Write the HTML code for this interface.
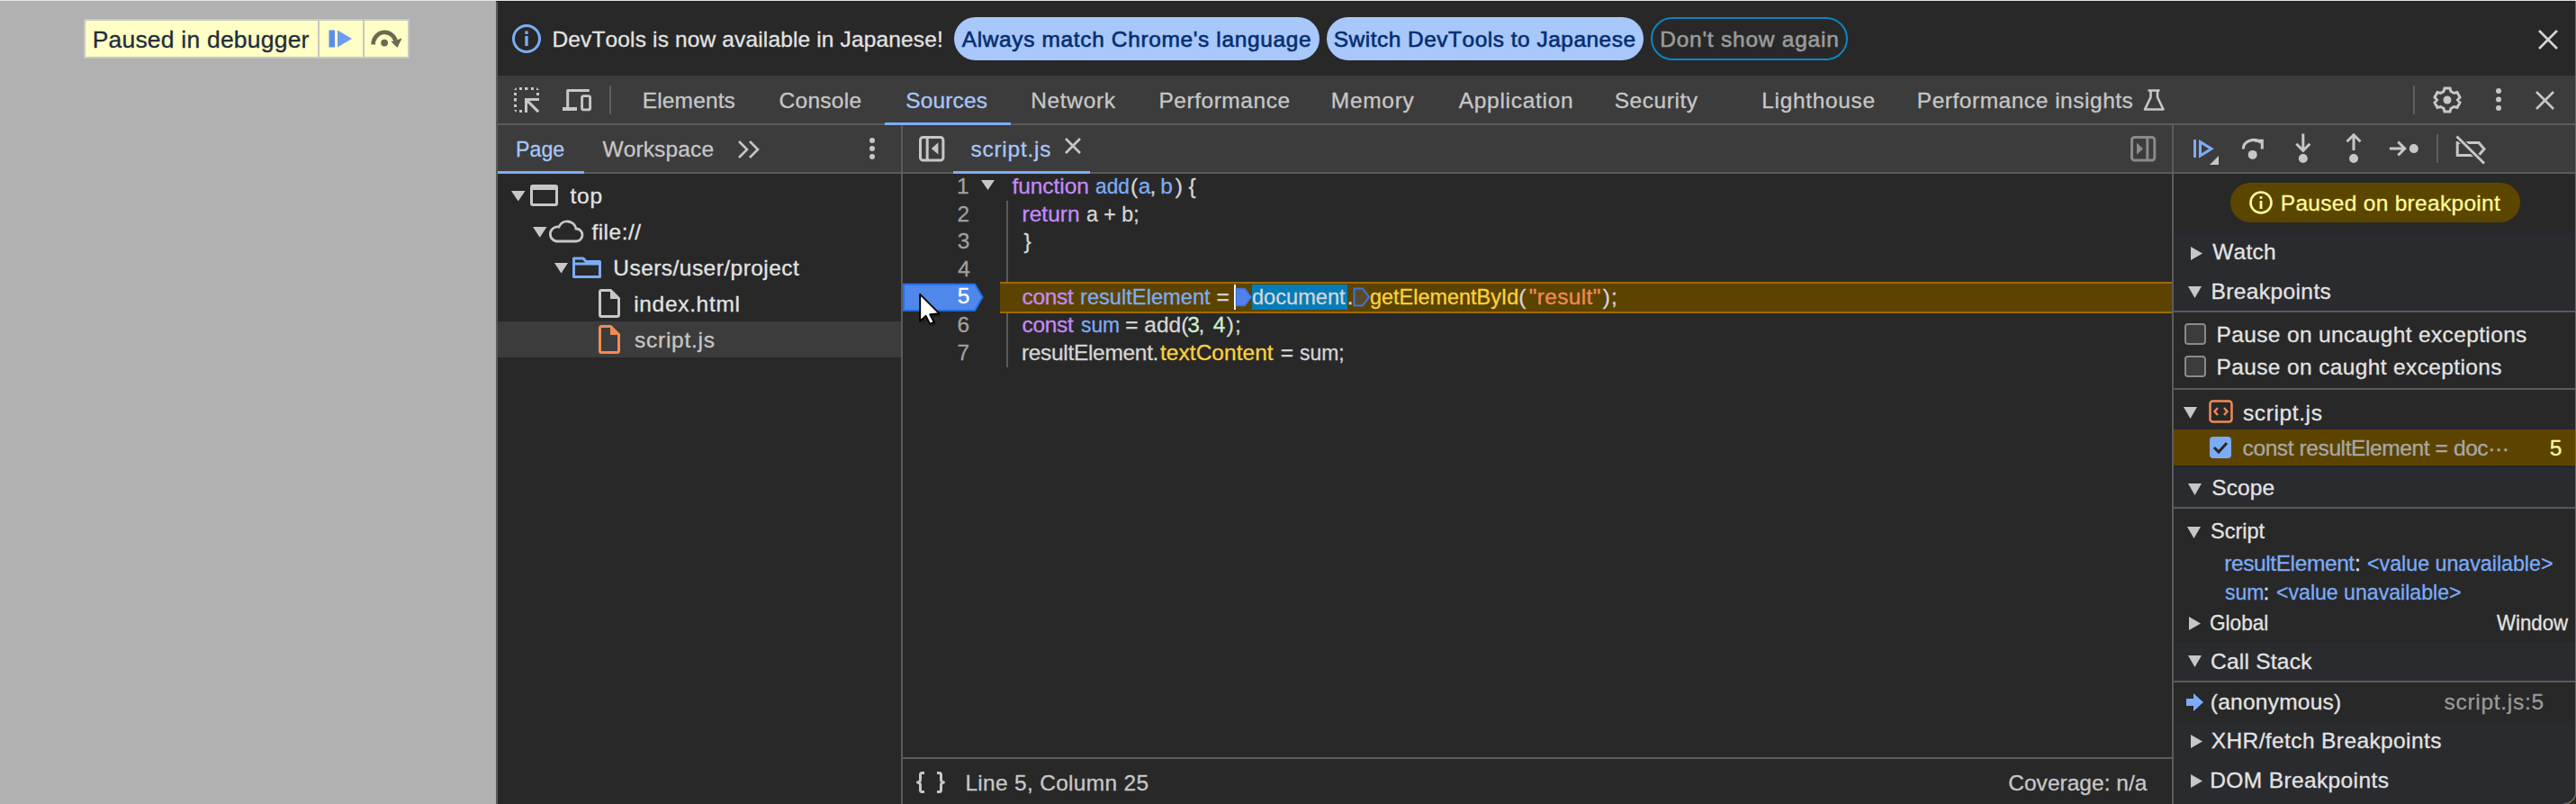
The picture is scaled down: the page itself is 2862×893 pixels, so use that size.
<!DOCTYPE html>
<html><head><meta charset="utf-8"><style>
html,body{margin:0;padding:0;width:2862px;height:893px;overflow:hidden;background:#282828;}
body{position:relative;font-family:"Liberation Sans",sans-serif;font-kerning:none;}
body>div{position:absolute;box-sizing:border-box;}
.t{white-space:pre;-webkit-text-stroke:0.3px currentColor;}
</style></head><body>
<div style="left:0px;top:0px;width:551px;height:893px;background:#b1b1b1;"></div>
<div style="left:0px;top:0px;width:2862px;height:1px;background:#e4e4e4;"></div>
<div style="left:93px;top:21px;width:362px;height:44px;background:#ffffc6;border:2px solid #c8c8c3;"></div>
<div style="left:353px;top:23px;width:2px;height:40px;background:#c8c8c3;"></div>
<div style="left:403px;top:23px;width:2px;height:40px;background:#c8c8c3;"></div>
<div class="t" style="left:102.63px;top:30.76px;font-size:26.5px;line-height:26.5px;color:#222c3a;letter-spacing:0.211px;">Paused in debugger</div>
<svg style="position:absolute;left:364px;top:32px;" width="30" height="22" viewBox="0 0 30 22"><rect x="1.5" y="1.5" width="6.5" height="19" fill="#5e8ee8"/><path d="M11 1.5 L27 11 L11 20.5 Z" fill="#6c9cf0"/></svg>
<svg style="position:absolute;left:405px;top:28px;" width="45" height="30" viewBox="0 0 45 30"><path d="M9.6 21.5 A12.8 13.5 0 0 1 34.5 17" stroke="#6b6b52" stroke-width="4.6" fill="none"/><path d="M29.5 18.2 L41.6 14.6 L36.4 25 Z" fill="#6b6b52"/><circle cx="22.1" cy="19.6" r="3.9" fill="#6b6b52"/></svg>
<div style="left:551px;top:1px;width:2px;height:892px;background:#5a5a5a;"></div>
<div style="left:553px;top:1px;width:2309px;height:83px;background:#282828;"></div>
<div style="left:551px;top:1px;width:2311px;height:1px;background:#212121;"></div>
<svg style="position:absolute;left:567px;top:25px;" width="36" height="36" viewBox="0 0 36 36"><circle cx="18" cy="18" r="14.5" stroke="#7cacf8" stroke-width="3" fill="none"/><rect x="16.3" y="15" width="3.4" height="11" fill="#7cacf8"/><rect x="16.3" y="9.5" width="3.4" height="3.4" fill="#7cacf8"/></svg>
<div class="t" style="left:613.49px;top:31.76px;font-size:24.5px;line-height:24.5px;color:#e3e3e3;letter-spacing:0.142px;">DevTools is now available in Japanese!</div>
<div style="left:1060px;top:19px;width:406px;height:48px;background:#a8c7fa;border-radius:24px;"></div>
<div class="t" style="left:1068.75px;top:31.76px;font-size:24.5px;line-height:24.5px;color:#062e6f;letter-spacing:0.628px;-webkit-text-stroke:0.6px #062e6f;">Always match Chrome's language</div>
<div style="left:1474px;top:19px;width:352px;height:48px;background:#a8c7fa;border-radius:24px;"></div>
<div class="t" style="left:1481.69px;top:31.76px;font-size:24.5px;line-height:24.5px;color:#062e6f;letter-spacing:0.487px;-webkit-text-stroke:0.6px #062e6f;">Switch DevTools to Japanese</div>
<div style="left:1834px;top:19px;width:219px;height:48px;background:transparent;border:2px solid #0f84c4;border-radius:24px;"></div>
<div class="t" style="left:1844.19px;top:31.76px;font-size:24.5px;line-height:24.5px;color:#9a9a9a;letter-spacing:0.761px;-webkit-text-stroke:0.6px #9a9a9a;">Don't show again</div>
<svg style="position:absolute;left:2818px;top:31px;" width="26" height="26" viewBox="0 0 26 26"><path d="M3 3 L23 23 M23 3 L3 23" stroke="#d4d4d4" stroke-width="2.6"/></svg>
<div style="left:553px;top:84px;width:2309px;height:53px;background:#3c3c3c;"></div>
<div style="left:553px;top:137px;width:2309px;height:2px;background:#5b5b5b;"></div>
<svg style="position:absolute;left:569px;top:95px;" width="34" height="34" viewBox="0 0 34 34"><g fill="#c7c7c7"><path d="M2 5 L5 2 V5 Z"/><rect x="8" y="2" width="3" height="3"/><rect x="14" y="2" width="3.5" height="3"/><rect x="21" y="2" width="3" height="3"/><path d="M27 2 L30 5 H27 Z"/><rect x="2" y="8" width="3" height="3"/><rect x="27" y="8" width="3" height="3"/><rect x="2" y="14" width="3" height="3.5"/><rect x="2" y="21" width="3" height="3"/><path d="M2 27 L5 30 V27 Z"/><rect x="8" y="27" width="3" height="3"/><path d="M14 14 H30 V17 H19.2 L30.2 28 L28 30.2 L17 19.2 V30 H14 Z"/></g></svg>
<svg style="position:absolute;left:622px;top:96px;" width="40" height="32" viewBox="0 0 40 32"><path d="M8.7 3 H32.8 V6 H10.2 V23 H19 V27 H3 V23 H7.2 V4.5 Q7.2 3 8.7 3 Z" fill="#c7c7c7"/><rect x="24.6" y="10.6" width="9" height="15.3" rx="2" stroke="#c7c7c7" stroke-width="2.9" fill="none"/></svg>
<div style="left:677px;top:95px;width:2px;height:32px;background:#5f5f5f;"></div>
<div class="t" style="left:713.79px;top:99.76px;font-size:24.5px;line-height:24.5px;color:#c7c7c7;letter-spacing:0.138px;">Elements</div>
<div class="t" style="left:865.56px;top:99.76px;font-size:24.5px;line-height:24.5px;color:#c7c7c7;letter-spacing:0.274px;">Console</div>
<div class="t" style="left:1006.29px;top:99.76px;font-size:24.5px;line-height:24.5px;color:#a8c7fa;letter-spacing:0.120px;">Sources</div>
<div class="t" style="left:1145.29px;top:99.76px;font-size:24.5px;line-height:24.5px;color:#c7c7c7;letter-spacing:0.637px;">Network</div>
<div class="t" style="left:1287.39px;top:99.76px;font-size:24.5px;line-height:24.5px;color:#c7c7c7;letter-spacing:0.545px;">Performance</div>
<div class="t" style="left:1478.79px;top:99.76px;font-size:24.5px;line-height:24.5px;color:#c7c7c7;letter-spacing:0.696px;">Memory</div>
<div class="t" style="left:1620.75px;top:99.76px;font-size:24.5px;line-height:24.5px;color:#c7c7c7;letter-spacing:0.698px;">Application</div>
<div class="t" style="left:1793.69px;top:99.76px;font-size:24.5px;line-height:24.5px;color:#c7c7c7;letter-spacing:0.551px;">Security</div>
<div class="t" style="left:1957.29px;top:99.76px;font-size:24.5px;line-height:24.5px;color:#c7c7c7;letter-spacing:0.658px;">Lighthouse</div>
<div class="t" style="left:2129.79px;top:99.76px;font-size:24.5px;line-height:24.5px;color:#c7c7c7;letter-spacing:0.524px;">Performance insights</div>
<div style="left:983px;top:136px;width:140px;height:3px;background:#7cacf8;"></div>
<svg style="position:absolute;left:2380px;top:98px;" width="28" height="26" viewBox="0 0 28 26"><path d="M6.5 2.5 H19.5 M9.5 2.5 V10 L3 23.5 H23.5 L17 10 V2.5" stroke="#c7c7c7" stroke-width="2.6" fill="none" stroke-linejoin="round"/></svg>
<div style="left:2681px;top:95px;width:2px;height:32px;background:#5f5f5f;"></div>
<svg style="position:absolute;left:2702px;top:95px;" width="34" height="32" viewBox="0 0 34 32"><g transform="translate(17,16)"><path fill="none" stroke="#c7c7c7" stroke-width="3" d="M-3,-13 L3,-13 L4,-9.5 L7.5,-7.5 L11,-8.5 L14,-3 L11.5,0 L14,3 L11,8.5 L7.5,7.5 L4,9.5 L3,13 L-3,13 L-4,9.5 L-7.5,7.5 L-11,8.5 L-14,3 L-11.5,0 L-14,-3 L-11,-8.5 L-7.5,-7.5 L-4,-9.5 Z"/><circle r="4.5" fill="#c7c7c7"/></g></svg>
<svg style="position:absolute;left:2770px;top:96px;" width="12" height="30" viewBox="0 0 12 30"><circle cx="6" cy="5" r="3" fill="#c7c7c7"/><circle cx="6" cy="14.5" r="3" fill="#c7c7c7"/><circle cx="6" cy="24" r="3" fill="#c7c7c7"/></svg>
<svg style="position:absolute;left:2815px;top:100px;" width="26" height="24" viewBox="0 0 26 24"><path d="M3 2 L22 21 M22 2 L3 21" stroke="#c7c7c7" stroke-width="2.6"/></svg>
<div style="left:553px;top:139px;width:448px;height:52px;background:#3c3c3c;"></div>
<div style="left:553px;top:191px;width:448px;height:2px;background:#5b5b5b;"></div>
<div style="left:553px;top:189.5px;width:96px;height:3.5px;background:#7cacf8;"></div>
<div class="t" style="left:573.39px;top:153.76px;font-size:24.5px;line-height:24.5px;color:#a8c7fa;letter-spacing:0.000px;transform:scaleX(0.9479);transform-origin:0 0;">Page</div>
<div class="t" style="left:669.39px;top:153.76px;font-size:24.5px;line-height:24.5px;color:#c7c7c7;letter-spacing:0.145px;">Workspace</div>
<svg style="position:absolute;left:818px;top:154px;" width="30" height="24" viewBox="0 0 30 24"><path d="M3 3 L12 12 L3 21 M15 3 L24 12 L15 21" stroke="#c7c7c7" stroke-width="2.6" fill="none"/></svg>
<svg style="position:absolute;left:963px;top:152px;" width="12" height="28" viewBox="0 0 12 28"><circle cx="6" cy="4" r="3" fill="#c7c7c7"/><circle cx="6" cy="13" r="3" fill="#c7c7c7"/><circle cx="6" cy="22" r="3" fill="#c7c7c7"/></svg>
<div style="left:1001px;top:139px;width:2px;height:754px;background:#5b5b5b;"></div>
<div style="left:553px;top:357px;width:448px;height:40px;background:#3c3c3c;"></div>
<svg style="position:absolute;left:568px;top:212.4px;" width="15.5" height="11.5" viewBox="0 0 15.5 11.5"><path d="M0 0 H15.5 L7.75 11.5 Z" fill="#c7c7c7"/></svg>
<svg style="position:absolute;left:588px;top:204px;" width="34" height="26" viewBox="0 0 34 26"><path fill-rule="evenodd" fill="#c7c7c7" d="M4 1 H29 Q32 1 32 4 V22 Q32 25 29 25 H4 Q1 25 1 22 V4 Q1 1 4 1 Z M4 7 V22 H29 V7 Z"/></svg>
<div class="t" style="left:633.43px;top:205.76px;font-size:24.5px;line-height:24.5px;color:#e3e3e3;letter-spacing:0.771px;">top</div>
<svg style="position:absolute;left:592px;top:252.2px;" width="15.5" height="11.7" viewBox="0 0 15.5 11.7"><path d="M0 0 H15.5 L7.75 11.7 Z" fill="#c7c7c7"/></svg>
<svg style="position:absolute;left:609px;top:244px;" width="40" height="28" viewBox="0 0 40 28"><path d="M9 24 H31 A7 7 0 0 0 31 10 A10 10 0 0 0 12 8 A8 8 0 0 0 9 24 Z" stroke="#c7c7c7" stroke-width="2.8" fill="none"/></svg>
<div class="t" style="left:657.45px;top:245.76px;font-size:24.5px;line-height:24.5px;color:#e3e3e3;letter-spacing:0.468px;">file://</div>
<svg style="position:absolute;left:616px;top:292.4px;" width="15" height="11.4" viewBox="0 0 15 11.4"><path d="M0 0 H15 L7.5 11.4 Z" fill="#c7c7c7"/></svg>
<svg style="position:absolute;left:635px;top:283px;" width="36" height="28" viewBox="0 0 36 28"><path d="M2.5 4 H13 L16 7.5 H31.5 V24.5 H2.5 Z" stroke="#7cacf8" stroke-width="3" fill="none" stroke-linejoin="round"/><path d="M2.5 10 H31.5" stroke="#7cacf8" stroke-width="3"/></svg>
<div class="t" style="left:681.31px;top:285.76px;font-size:24.5px;line-height:24.5px;color:#e3e3e3;letter-spacing:0.458px;">Users/user/project</div>
<svg style="position:absolute;left:663px;top:319px;" width="28" height="36" viewBox="0 0 28 36"><path d="M5 3.5 H15.5 L24.5 12.5 V30.5 Q24.5 32.5 22.5 32.5 H5 Q3.5 32.5 3.5 30.5 V5.5 Q3.5 3.5 5 3.5 Z" stroke="#c7c7c7" stroke-width="3" fill="none" stroke-linejoin="round"/><path d="M15 2 L26 13 H15 Z" fill="#c7c7c7"/></svg>
<div class="t" style="left:704.16px;top:325.76px;font-size:24.5px;line-height:24.5px;color:#e3e3e3;letter-spacing:0.680px;">index.html</div>
<svg style="position:absolute;left:663px;top:359px;" width="28" height="36" viewBox="0 0 28 36"><path d="M5 3.5 H15.5 L24.5 12.5 V30.5 Q24.5 32.5 22.5 32.5 H5 Q3.5 32.5 3.5 30.5 V5.5 Q3.5 3.5 5 3.5 Z" stroke="#f28b54" stroke-width="3" fill="none" stroke-linejoin="round"/><path d="M15 2 L26 13 H15 Z" fill="#f28b54"/></svg>
<div class="t" style="left:705.12px;top:365.76px;font-size:24.5px;line-height:24.5px;color:#c7c7c7;letter-spacing:0.717px;">script.js</div>
<div style="left:1003px;top:139px;width:1410px;height:52px;background:#3c3c3c;"></div>
<div style="left:1003px;top:191px;width:1410px;height:2px;background:#5b5b5b;"></div>
<div style="left:1059px;top:190px;width:152px;height:3px;background:#7cacf8;"></div>
<svg style="position:absolute;left:1020px;top:150px;" width="30" height="30" viewBox="0 0 30 30"><rect x="2.5" y="2.5" width="25.4" height="25.5" rx="3" stroke="#c7c7c7" stroke-width="3" fill="none"/><rect x="8.7" y="2.5" width="3" height="25.5" fill="#c7c7c7"/><path d="M22.4 8.3 V21.6 L14.8 15 Z" fill="#c7c7c7"/></svg>
<div class="t" style="left:1078.52px;top:153.76px;font-size:24.5px;line-height:24.5px;color:#a8c7fa;letter-spacing:0.729px;">script.js</div>
<svg style="position:absolute;left:1182px;top:152px;" width="20" height="20" viewBox="0 0 20 20"><path d="M2 2 L18 18 M18 2 L2 18" stroke="#c7c7c7" stroke-width="2.6"/></svg>
<svg style="position:absolute;left:2366px;top:150px;" width="30" height="30" viewBox="0 0 30 30"><rect x="2.5" y="2.5" width="25.3" height="25.5" rx="3" stroke="#8a8a8a" stroke-width="3" fill="none"/><rect x="18.3" y="2.5" width="3" height="25.5" fill="#8a8a8a"/><path d="M8 8.5 V21.8 L15 15.2 Z" fill="#8a8a8a"/></svg>
<div style="left:1118px;top:223px;width:2px;height:185px;background:#5a5a5a;"></div>
<div style="left:1111px;top:313px;width:1302px;height:35px;background:#5c4300;border-top:2px solid #a06a00;border-bottom:2px solid #a06a00;"></div>
<div class="t" style="left:1062.93px;top:194.56px;font-size:24.5px;line-height:24.5px;color:#a0a0a0;letter-spacing:0.000px;">1</div>
<div class="t" style="left:1063.57px;top:225.51px;font-size:24.5px;line-height:24.5px;color:#a0a0a0;letter-spacing:0.000px;">2</div>
<div class="t" style="left:1063.87px;top:256.46px;font-size:24.5px;line-height:24.5px;color:#a0a0a0;letter-spacing:0.000px;">3</div>
<div class="t" style="left:1064.24px;top:287.41px;font-size:24.5px;line-height:24.5px;color:#a0a0a0;letter-spacing:0.000px;">4</div>
<svg style="position:absolute;left:1002px;top:314px;" width="92" height="33" viewBox="0 0 92 33"><path d="M2 1.8 H81 L89.5 16 L81 30.8 H2 Z" fill="#5087ea" stroke="#1f74f0" stroke-width="2"/></svg>
<div class="t" style="left:1063.82px;top:317.36px;font-size:24.5px;line-height:24.5px;color:#ffffff;letter-spacing:0.000px;">5</div>
<div class="t" style="left:1063.56px;top:349.31px;font-size:24.5px;line-height:24.5px;color:#a0a0a0;letter-spacing:0.000px;">6</div>
<div class="t" style="left:1063.54px;top:380.26px;font-size:24.5px;line-height:24.5px;color:#a0a0a0;letter-spacing:0.000px;">7</div>
<svg style="position:absolute;left:1089.5px;top:199.5px;" width="15" height="11" viewBox="0 0 15 11"><path d="M0 0 H15 L7.5 11 Z" fill="#c7c7c7"/></svg>
<div class="t" style="left:1124.45px;top:194.56px;font-size:24.5px;line-height:24.5px;color:#c58af9;letter-spacing:-0.053px;">function</div>
<div class="t" style="left:1216.83px;top:194.56px;font-size:24.5px;line-height:24.5px;color:#7cacf8;letter-spacing:0.000px;transform:scaleX(0.9279);transform-origin:0 0;">add</div>
<div class="t" style="left:1255.88px;top:194.56px;font-size:24.5px;line-height:24.5px;color:#d6d6d6;letter-spacing:0.000px;">(</div>
<div class="t" style="left:1264.76px;top:194.56px;font-size:24.5px;line-height:24.5px;color:#7cacf8;letter-spacing:0.000px;">a</div>
<div class="t" style="left:1277.60px;top:194.56px;font-size:24.5px;line-height:24.5px;color:#d6d6d6;letter-spacing:0.000px;">,</div>
<div class="t" style="left:1289.22px;top:194.56px;font-size:24.5px;line-height:24.5px;color:#7cacf8;letter-spacing:0.000px;">b</div>
<div class="t" style="left:1305.66px;top:194.56px;font-size:24.5px;line-height:24.5px;color:#d6d6d6;letter-spacing:0.000px;">)</div>
<div class="t" style="left:1320.39px;top:194.56px;font-size:24.5px;line-height:24.5px;color:#d6d6d6;letter-spacing:0.000px;">{</div>
<div class="t" style="left:1135.47px;top:225.51px;font-size:24.5px;line-height:24.5px;color:#c58af9;letter-spacing:0.023px;">return</div>
<div class="t" style="left:1206.81px;top:225.51px;font-size:24.5px;line-height:24.5px;color:#d6d6d6;letter-spacing:0.000px;transform:scaleX(0.9466);transform-origin:0 0;">a + b;</div>
<div class="t" style="left:1137.39px;top:256.46px;font-size:24.5px;line-height:24.5px;color:#d6d6d6;letter-spacing:0.000px;">}</div>
<div class="t" style="left:1135.56px;top:318.36px;font-size:24.5px;line-height:24.5px;color:#c58af9;letter-spacing:-0.310px;">const</div>
<div class="t" style="left:1199.73px;top:318.36px;font-size:24.5px;line-height:24.5px;color:#7cacf8;letter-spacing:0.000px;transform:scaleX(0.9657);transform-origin:0 0;">resultElement</div>
<div class="t" style="left:1351.60px;top:318.36px;font-size:24.5px;line-height:24.5px;color:#d6d6d6;letter-spacing:0.000px;">=</div>
<div style="left:1391px;top:316px;width:106px;height:28px;background:#047cb8;"></div>
<div class="t" style="left:1391.41px;top:318.36px;font-size:24.5px;line-height:24.5px;color:#d6d6d6;letter-spacing:0.000px;transform:scaleX(0.9625);transform-origin:0 0;">document</div>
<div class="t" style="left:1496.86px;top:318.36px;font-size:24.5px;line-height:24.5px;color:#d6d6d6;letter-spacing:0.000px;">.</div>
<div class="t" style="left:1522.12px;top:318.36px;font-size:24.5px;line-height:24.5px;color:#fcd33b;letter-spacing:0.000px;transform:scaleX(0.9563);transform-origin:0 0;">getElementById</div>
<div class="t" style="left:1687.28px;top:318.36px;font-size:24.5px;line-height:24.5px;color:#d6d6d6;letter-spacing:0.000px;">(</div>
<div class="t" style="left:1698.76px;top:318.36px;font-size:24.5px;line-height:24.5px;color:#f28b54;letter-spacing:0.340px;">"result"</div>
<div class="t" style="left:1780.66px;top:318.36px;font-size:24.5px;line-height:24.5px;color:#d6d6d6;letter-spacing:1.079px;">);</div>
<div style="left:1371px;top:316px;width:2px;height:28px;background:#ffffff;"></div>
<svg style="position:absolute;left:1372px;top:319px;" width="20" height="22" viewBox="0 0 20 22"><path d="M1.5 1.5 H11 L18 11 L11 20.5 H1.5 Z" fill="#4f82ea" stroke="#3d74e0" stroke-width="1.5"/></svg>
<svg style="position:absolute;left:1503px;top:319px;" width="20" height="22" viewBox="0 0 20 22"><path d="M1.5 1.5 H11 L18 11 L11 20.5 H1.5 Z" fill="#5a4a2c" stroke="#3d74e0" stroke-width="2"/></svg>
<div class="t" style="left:1135.56px;top:349.31px;font-size:24.5px;line-height:24.5px;color:#c58af9;letter-spacing:-0.310px;">const</div>
<div class="t" style="left:1200.66px;top:349.31px;font-size:24.5px;line-height:24.5px;color:#7cacf8;letter-spacing:0.000px;transform:scaleX(0.9321);transform-origin:0 0;">sum</div>
<div class="t" style="left:1250.20px;top:349.31px;font-size:24.5px;line-height:24.5px;color:#d6d6d6;letter-spacing:0.000px;">=</div>
<div class="t" style="left:1271.36px;top:349.31px;font-size:24.5px;line-height:24.5px;color:#d6d6d6;letter-spacing:0.000px;">add(</div>
<div class="t" style="left:1319.17px;top:349.31px;font-size:24.5px;line-height:24.5px;color:#c8f0d0;letter-spacing:0.000px;">3</div>
<div class="t" style="left:1331.60px;top:349.31px;font-size:24.5px;line-height:24.5px;color:#d6d6d6;letter-spacing:0.000px;">,</div>
<div class="t" style="left:1347.84px;top:349.31px;font-size:24.5px;line-height:24.5px;color:#c8f0d0;letter-spacing:0.000px;">4</div>
<div class="t" style="left:1362.66px;top:349.31px;font-size:24.5px;line-height:24.5px;color:#d6d6d6;letter-spacing:1.079px;">);</div>
<div class="t" style="left:1134.97px;top:380.26px;font-size:24.5px;line-height:24.5px;color:#d6d6d6;letter-spacing:-0.318px;">resultElement.</div>
<div class="t" style="left:1289.03px;top:380.26px;font-size:24.5px;line-height:24.5px;color:#fcd33b;letter-spacing:0.035px;">textContent</div>
<div class="t" style="left:1422.80px;top:380.26px;font-size:24.5px;line-height:24.5px;color:#d6d6d6;letter-spacing:0.000px;">=</div>
<div class="t" style="left:1443.86px;top:380.26px;font-size:24.5px;line-height:24.5px;color:#d6d6d6;letter-spacing:0.000px;transform:scaleX(0.9341);transform-origin:0 0;">sum;</div>
<svg style="position:absolute;left:1016px;top:321px;" width="34" height="44" viewBox="0 0 34 44"><path d="M7.5 7 L7.5 37 L14 31 L18.5 40 L23 38 L18.5 29.5 L28.5 28.5 Z" fill="#000" opacity="0.25" transform="translate(1,1.5)"/><path d="M6.2 5.8 L6.2 35.8 L12.7 29.8 L17.2 38.8 L21.7 36.8 L17.2 28.3 L27.7 27.3 Z" fill="#fff" stroke="#000" stroke-width="1.9" stroke-linejoin="round"/></svg>
<div style="left:1003px;top:841px;width:1410px;height:2px;background:#5b5b5b;"></div>
<svg style="position:absolute;left:1016px;top:855px;" width="38" height="28" viewBox="0 0 38 28"><path d="M11 3.5 H8.5 Q6.5 3.5 6.5 5.5 V11 Q6.5 13.5 3.5 14 Q6.5 14.5 6.5 17 V22.5 Q6.5 24.5 8.5 24.5 H11 M25 3.5 H27.5 Q29.5 3.5 29.5 5.5 V11 Q29.5 13.5 32.5 14 Q29.5 14.5 29.5 17 V22.5 Q29.5 24.5 27.5 24.5 H25" stroke="#c7c7c7" stroke-width="3" fill="none" stroke-linejoin="round"/></svg>
<div class="t" style="left:1072.39px;top:858.26px;font-size:24.5px;line-height:24.5px;color:#c7c7c7;letter-spacing:0.299px;">Line 5, Column 25</div>
<div class="t" style="left:2231.26px;top:858.26px;font-size:24.5px;line-height:24.5px;color:#c7c7c7;letter-spacing:0.020px;">Coverage: n/a</div>
<div style="left:2413px;top:139px;width:2px;height:754px;background:#5b5b5b;"></div>
<div style="left:2415px;top:139px;width:447px;height:52px;background:#3c3c3c;"></div>
<div style="left:2415px;top:191px;width:447px;height:2px;background:#5b5b5b;"></div>
<svg style="position:absolute;left:2420px;top:145px;" width="350" height="45" viewBox="0 0 350 45"><g fill="#7cacf8"><rect x="17" y="10" width="3" height="20"/></g><path d="M24.5 12.6 L37 20.3 L24.5 28 Z" stroke="#7cacf8" stroke-width="3" fill="none" stroke-linejoin="miter"/><path d="M45 28 V38 H35 Z" fill="#c7c7c7"/><g stroke="#c7c7c7" stroke-width="3" fill="none"><path d="M72.3 20.5 A11.5 10 0 0 1 92 13.5"/><path d="M85 11.3 H93.3 V20.5"/><path d="M138.8 3.5 V22 M131.3 14.8 L138.8 22.3 L146.3 14.8"/><path d="M195 22 V5 M187.5 12.3 L195 4.8 L202.5 12.3"/><path d="M234.9 20 H252 M244.3 12.5 L251.8 20 L244.3 27.5"/></g><g fill="#c7c7c7"><circle cx="82.7" cy="26.9" r="5"/><circle cx="138.8" cy="31" r="5"/><circle cx="195" cy="31" r="5"/><circle cx="261.8" cy="20.1" r="5"/><rect x="287" y="4" width="2" height="32" fill="#5f5f5f"/></g><path d="M310.2 13.5 H334 L340 20.5 L334 27.5 H310.2 Z" stroke="#c7c7c7" stroke-width="3" fill="none"/><path d="M309.5 6.5 L340 36.5" stroke="#3c3c3c" stroke-width="6"/><path d="M309.5 6.5 L340 36.5" stroke="#c7c7c7" stroke-width="3"/></svg>
<div style="left:2415px;top:193px;width:447px;height:66px;background:#282828;"></div>
<div style="left:2478px;top:203px;width:322px;height:44px;background:#5b4600;border-radius:22px;"></div>
<svg style="position:absolute;left:2497px;top:210px;" width="30" height="30" viewBox="0 0 30 30"><circle cx="15" cy="15" r="11.5" stroke="#fdfc9b" stroke-width="2.6" fill="none"/><rect x="13.6" y="13" width="2.8" height="9" fill="#fdfc9b"/><rect x="13.6" y="8" width="2.8" height="2.8" fill="#fdfc9b"/></svg>
<div class="t" style="left:2533.79px;top:213.76px;font-size:24.5px;line-height:24.5px;color:#fdfc9b;letter-spacing:0.296px;">Paused on breakpoint</div>
<div style="left:2415px;top:259px;width:447px;height:86px;background:#2a2b2f;"></div>
<div style="left:2415px;top:345px;width:447px;height:2px;background:#5b5b5b;"></div>
<svg style="position:absolute;left:2434px;top:274px;" width="13" height="15" viewBox="0 0 13 15"><path d="M0 0 L13 7.5 L0 15 Z" fill="#c7c7c7"/></svg>
<div class="t" style="left:2458.29px;top:268.06px;font-size:24.5px;line-height:24.5px;color:#e3e3e3;letter-spacing:0.217px;">Watch</div>
<svg style="position:absolute;left:2431px;top:318px;" width="15" height="13" viewBox="0 0 15 13"><path d="M0 0 H15 L7.5 13 Z" fill="#c7c7c7"/></svg>
<div class="t" style="left:2456.39px;top:311.76px;font-size:24.5px;line-height:24.5px;color:#e3e3e3;letter-spacing:0.412px;">Breakpoints</div>
<div style="left:2415px;top:347px;width:447px;height:84px;background:#282828;"></div>
<div style="left:2427px;top:359px;width:24px;height:24px;background:#3c3c3c;border:2px solid #8a8a8a;border-radius:4px;"></div>
<div class="t" style="left:2462.49px;top:359.76px;font-size:24.5px;line-height:24.5px;color:#e3e3e3;letter-spacing:0.363px;">Pause on uncaught exceptions</div>
<div style="left:2427px;top:395px;width:24px;height:24px;background:#3c3c3c;border:2px solid #8a8a8a;border-radius:4px;"></div>
<div class="t" style="left:2462.49px;top:395.76px;font-size:24.5px;line-height:24.5px;color:#e3e3e3;letter-spacing:0.371px;">Pause on caught exceptions</div>
<div style="left:2415px;top:431px;width:447px;height:2px;background:#5b5b5b;"></div>
<div style="left:2415px;top:433px;width:447px;height:44px;background:#282828;"></div>
<svg style="position:absolute;left:2426px;top:452px;" width="15" height="13" viewBox="0 0 15 13"><path d="M0 0 H15 L7.5 13 Z" fill="#c7c7c7"/></svg>
<svg style="position:absolute;left:2454px;top:444px;" width="27" height="26" viewBox="0 0 27 26"><rect x="1.5" y="1.5" width="24" height="23" rx="3" stroke="#f28b54" stroke-width="2.5" fill="none"/><path d="M10 9 L6.5 13 L10 17 M17 9 L20.5 13 L17 17" stroke="#f28b54" stroke-width="2.3" fill="none"/></svg>
<div class="t" style="left:2491.92px;top:446.76px;font-size:24.5px;line-height:24.5px;color:#e3e3e3;letter-spacing:0.617px;">script.js</div>
<div style="left:2415px;top:477px;width:447px;height:40px;background:#5c4400;"></div>
<div style="left:2455px;top:485px;width:24px;height:24px;background:#7cacf8;border-radius:4px;"></div>
<svg style="position:absolute;left:2455px;top:485px;" width="24" height="24" viewBox="0 0 24 24"><path d="M5 12 L10 17 L19 7" stroke="#282828" stroke-width="3" fill="none"/></svg>
<div class="t" style="left:2491.56px;top:485.76px;font-size:24.5px;line-height:24.5px;color:#a8a8a8;letter-spacing:-0.396px;">const resultElement = doc···</div>
<div class="t" style="left:2832.82px;top:485.76px;font-size:24.5px;line-height:24.5px;color:#fdfc9b;letter-spacing:0.000px;">5</div>
<div style="left:2415px;top:517px;width:447px;height:3px;background:#282828;"></div>
<div style="left:2415px;top:520px;width:447px;height:43px;background:#2a2b2f;"></div>
<div style="left:2415px;top:563px;width:447px;height:2px;background:#5b5b5b;"></div>
<svg style="position:absolute;left:2431px;top:537px;" width="15" height="13" viewBox="0 0 15 13"><path d="M0 0 H15 L7.5 13 Z" fill="#c7c7c7"/></svg>
<div class="t" style="left:2457.29px;top:529.76px;font-size:24.5px;line-height:24.5px;color:#e3e3e3;letter-spacing:0.083px;">Scope</div>
<div style="left:2415px;top:565px;width:447px;height:148px;background:#282828;"></div>
<svg style="position:absolute;left:2430px;top:585px;" width="15" height="13" viewBox="0 0 15 13"><path d="M0 0 H15 L7.5 13 Z" fill="#c7c7c7"/></svg>
<div class="t" style="left:2455.63px;top:577.76px;font-size:24.5px;line-height:24.5px;color:#e3e3e3;letter-spacing:0.000px;transform:scaleX(0.9587);transform-origin:0 0;">Script</div>
<div class="t" style="left:2471.17px;top:613.76px;font-size:24.5px;line-height:24.5px;color:#7cacf8;letter-spacing:-0.398px;">resultElement</div>
<div class="t" style="left:2616.06px;top:613.76px;font-size:24.5px;line-height:24.5px;color:#e3e3e3;letter-spacing:0.000px;">:</div>
<div class="t" style="left:2629.66px;top:613.76px;font-size:24.5px;line-height:24.5px;color:#7cacf8;letter-spacing:0.000px;transform:scaleX(0.9474);transform-origin:0 0;">&lt;value unavailable&gt;</div>
<div class="t" style="left:2472.16px;top:645.76px;font-size:24.5px;line-height:24.5px;color:#7cacf8;letter-spacing:0.000px;transform:scaleX(0.9366);transform-origin:0 0;">sum</div>
<div class="t" style="left:2514.56px;top:645.76px;font-size:24.5px;line-height:24.5px;color:#e3e3e3;letter-spacing:0.000px;">:</div>
<div class="t" style="left:2528.66px;top:645.76px;font-size:24.5px;line-height:24.5px;color:#7cacf8;letter-spacing:0.000px;transform:scaleX(0.9427);transform-origin:0 0;">&lt;value unavailable&gt;</div>
<svg style="position:absolute;left:2432px;top:685px;" width="13" height="15" viewBox="0 0 13 15"><path d="M0 0 L13 7.5 L0 15 Z" fill="#c7c7c7"/></svg>
<div class="t" style="left:2454.66px;top:680.26px;font-size:24.5px;line-height:24.5px;color:#e3e3e3;letter-spacing:0.000px;transform:scaleX(0.9227);transform-origin:0 0;">Global</div>
<div class="t" style="left:2773.70px;top:680.26px;font-size:24.5px;line-height:24.5px;color:#e3e3e3;letter-spacing:0.000px;transform:scaleX(0.9071);transform-origin:0 0;">Window</div>
<div style="left:2415px;top:713px;width:447px;height:43px;background:#2a2b2f;"></div>
<div style="left:2415px;top:756px;width:447px;height:2px;background:#5b5b5b;"></div>
<svg style="position:absolute;left:2431px;top:728px;" width="15" height="13" viewBox="0 0 15 13"><path d="M0 0 H15 L7.5 13 Z" fill="#c7c7c7"/></svg>
<div class="t" style="left:2456.06px;top:722.76px;font-size:24.5px;line-height:24.5px;color:#e3e3e3;letter-spacing:0.236px;">Call Stack</div>
<div style="left:2415px;top:758px;width:447px;height:43px;background:#282828;"></div>
<svg style="position:absolute;left:2427px;top:768px;" width="24" height="24" viewBox="0 0 24 24"><path d="M2 8 H10 V2 L21 12 L10 22 V16 H2 Z" fill="#7cacf8"/></svg>
<div class="t" style="left:2455.78px;top:767.76px;font-size:24.5px;line-height:24.5px;color:#e3e3e3;letter-spacing:0.246px;">(anonymous)</div>
<div class="t" style="left:2715.62px;top:767.76px;font-size:24.5px;line-height:24.5px;color:#9a9a9a;letter-spacing:0.694px;">script.js:5</div>
<div style="left:2415px;top:801px;width:447px;height:92px;background:#2a2b2f;"></div>
<svg style="position:absolute;left:2434px;top:816px;" width="13" height="15" viewBox="0 0 13 15"><path d="M0 0 L13 7.5 L0 15 Z" fill="#c7c7c7"/></svg>
<div class="t" style="left:2456.75px;top:810.76px;font-size:24.5px;line-height:24.5px;color:#e3e3e3;letter-spacing:0.390px;">XHR/fetch Breakpoints</div>
<svg style="position:absolute;left:2434px;top:860px;" width="13" height="15" viewBox="0 0 13 15"><path d="M0 0 L13 7.5 L0 15 Z" fill="#c7c7c7"/></svg>
<div class="t" style="left:2455.29px;top:854.76px;font-size:24.5px;line-height:24.5px;color:#e3e3e3;letter-spacing:0.375px;">DOM Breakpoints</div>
<div style="left:2861px;top:1px;width:1px;height:892px;background:#6a6a6a;"></div>
<svg style="position:absolute;left:2842px;top:873px;" width="20" height="20" viewBox="0 0 20 20"><path d="M20 0 V6 A14 14 0 0 1 6 20 H0 V20 H20 Z" fill="#2e2b12"/><path d="M20 6 A14 14 0 0 1 6 20" stroke="#6a6a6a" stroke-width="1.5" fill="none"/></svg>
</body></html>
